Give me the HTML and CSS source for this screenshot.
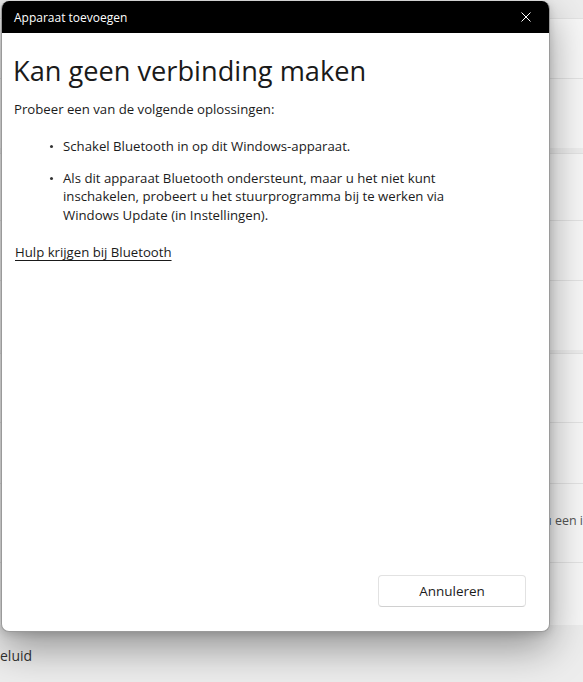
FILE: index.html
```html
<!DOCTYPE html>
<html lang="nl">
<head>
<meta charset="utf-8">
<title>Apparaat toevoegen</title>
<link rel="stylesheet" href="styles.css">
</head>
<body>
<div class="page">
  <div class="cards">
    <div class="card h60"></div>
    <div class="card h70"></div>
    <div class="card h67 gap5"></div>
    <div class="card h60"></div>
    <div class="card h70"></div>
    <div class="card h69 gap3"></div>
    <div class="card h61"></div>
    <div class="card h79"><span class="rfrag">u een i</span></div>
    <div class="card h63"></div>
  </div>
  <div class="footer-text">eluid</div>
</div>

<div class="dialog">
  <div class="titlebar">
    <span class="titlebar-text">Apparaat toevoegen</span>
    <svg class="close" width="10" height="10" viewBox="0 0 10 10"><path d="M0.5 0.5 L9.5 9.5 M9.5 0.5 L0.5 9.5" stroke="#fff" stroke-width="1" fill="none"/></svg>
  </div>
  <div class="content">
    <h1 class="heading">Kan geen verbinding maken</h1>
    <p class="intro">Probeer een van de volgende oplossingen:</p>
    <ul class="tips">
      <li>Schakel Bluetooth in op dit Windows-apparaat.</li>
      <li>Als dit apparaat Bluetooth ondersteunt, maar u het niet kunt inschakelen, probeert u het stuurprogramma bij te werken via Windows Update (in Instellingen).</li>
    </ul>
    <a class="help" href="#">Hulp krijgen bij Bluetooth</a>
  </div>
  <div class="actions">
    <button class="btn">Annuleren</button>
  </div>
</div>
</body>
</html>
```
FILE: styles.css
```css
* { box-sizing: border-box; }
html, body { margin: 0; padding: 0; }
body {
  width: 583px;
  height: 682px;
  overflow: hidden;
  background: #ededed;
  font-family: "Open Sans", "Noto Sans", sans-serif;
  color: #1b1b1b;
  position: relative;
}
.page {
  padding-top: 18px;
}
.cards { display: flex; flex-direction: column; }
.card {
  background: #f7f7f7;
  border-top: 1px solid #e3e3e3;
  display: flex;
  align-items: center;
  justify-content: flex-end;
  font-size: 14px;
  color: #333;
}
.h60 { height: 60px; }
.h61 { height: 61px; }
.h63 { height: 63px; }
.h67 { height: 67px; }
.h69 { height: 69px; }
.h70 { height: 70px; }
.h79 { height: 79px; }
.gap5 { margin-top: 5px; }
.gap3 { margin-top: 3px; }
.rfrag { color: #555; font-size: 12.5px; white-space: nowrap; margin-bottom: 6px; }
.footer-text { margin-top: 21px; padding-left: 0; font-size: 14px; color: #333; }

.dialog {
  position: absolute;
  left: 1px;
  top: 1px;
  width: 549px;
  height: 631px;
  background: #fff;
  border-radius: 8px;
  overflow: hidden;
  border: 1px solid #9a9a9a;
  border-top: none;
  box-shadow: 0 16px 40px rgba(0,0,0,0.38), 0 2px 8px rgba(0,0,0,0.15);
  display: flex;
  flex-direction: column;
}
.titlebar {
  height: 32px;
  background: #000;
  color: #fff;
  display: flex;
  align-items: center;
  justify-content: space-between;
  padding: 0 18px 0 12px;
  flex: none;
}
.titlebar-text { font-size: 12px; }
.close { display: block; }
.content {
  flex: 1;
  padding: 0 12px;
}
.heading {
  margin: 20px 0 0 -1px;
  font-size: 27.2px;
  font-weight: 500;
  line-height: 36px;
  color: #1a1a1a;
}
.intro {
  margin: 10px 0 0 0;
  font-size: 13.2px;
  line-height: 20px;
}
.tips {
  list-style: none;
  margin: 18px 0 0 0;
  padding-left: 49px;
  font-size: 13.2px;
  line-height: 18.5px;
  width: 460px;
}
.tips li {
  margin-bottom: 13px;
  position: relative;
}
.tips li::before {
  content: "";
  position: absolute;
  left: -13px;
  top: 8px;
  width: 3px;
  height: 3px;
  border-radius: 50%;
  background: #333;
}
.help {
  display: inline-block;
  margin: 6px 0 0 1px;
  font-size: 13.2px;
  color: #1a1a1a;
  text-decoration: underline;
  text-underline-offset: 3px;
}
.actions {
  flex: none;
  display: flex;
  justify-content: flex-end;
  padding: 0 23px 24px 0;
}
.btn {
  width: 148px;
  height: 32px;
  background: #fff;
  border: 1px solid #e2e2e2;
  border-bottom-color: #d0d0d0;
  border-radius: 4px;
  font-family: inherit;
  font-size: 13.5px;
  color: #1b1b1b;
}
```
